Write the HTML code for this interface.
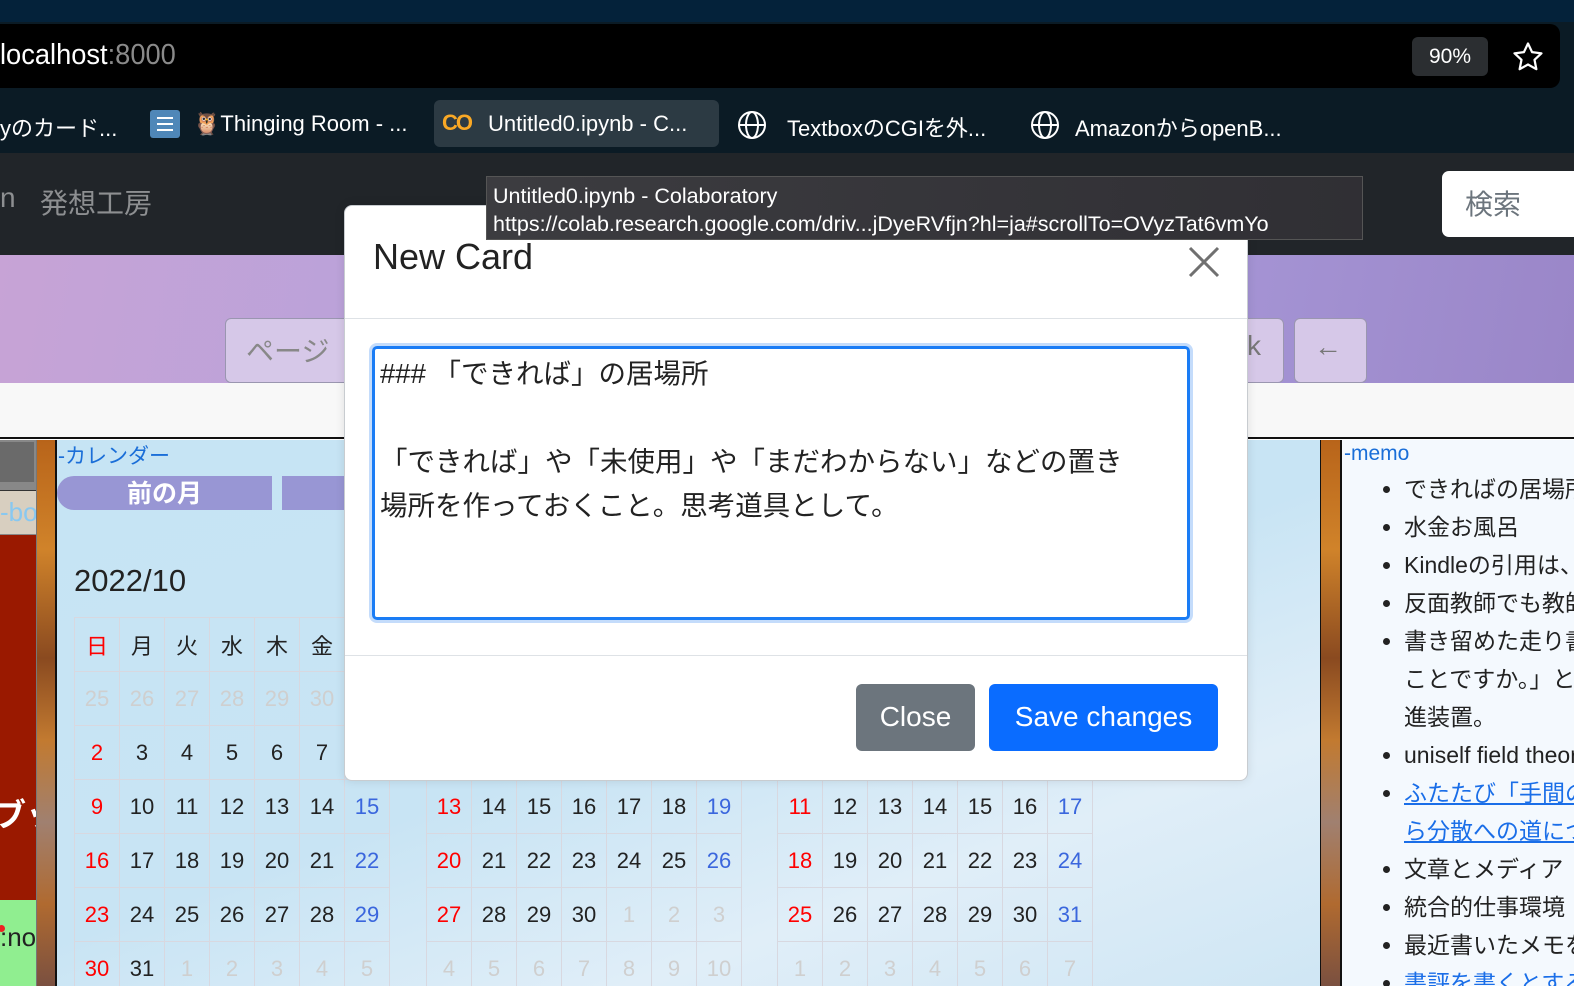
<!DOCTYPE html>
<html style="overflow:hidden"><head><meta charset="utf-8"><style>
*{margin:0;padding:0;box-sizing:border-box}
html,body{overflow:hidden}
body{width:1574px;height:986px;position:relative;font-family:"Liberation Sans","Noto Sans CJK JP",sans-serif;background:#fff}
.a{position:absolute;white-space:nowrap}
.leaves{background:linear-gradient(180deg,#b8641a,#d0832a 20%,#8a4a20 40%,#c27a30 55%,#a08070 70%,#b06a30 85%,#7a5040)}
.cal td{width:45px;height:54px;text-align:center;font-size:22px;color:#222;border:1px solid #d8d8e0}
.cal{border-collapse:collapse;position:absolute}
.cal td.r{color:#f00}.cal td.b{color:#3a66dd}.cal td.g{color:#cfcfcf}
.memo li{margin-left:62px;font-size:23px;line-height:38px;color:#222}
.memo a{color:#1a6ee8;text-decoration:underline}
.bm{font-size:22px;color:#fff;top:111px}
.clip{position:absolute;left:0;top:0;width:1574px;height:986px;overflow:hidden}
</style></head><body><div class="clip">
<div class="a" style="left:0;top:0;width:1574px;height:22px;background:#04223a"></div>
<div class="a" style="left:0;top:22px;width:1574px;height:131px;background:#0b1b25"></div>
<div class="a" style="left:0;top:24px;width:1560px;height:64px;background:#000;border-radius:0 10px 10px 0"></div>
<div class="a" style="left:0;top:39px;font-size:29px;color:#fff;transform:scaleX(.94);transform-origin:left">localhost<span style="color:#8a8a8a">:8000</span></div>
<div class="a" style="left:1412px;top:37px;width:76px;height:39px;background:#2b2e31;border-radius:6px;color:#fff;font-size:21px;text-align:center;line-height:39px">90%</div>
<svg class="a" style="left:1511px;top:40px" width="34" height="34" viewBox="0 0 24 24"><path d="M12 2.5l2.9 6.1 6.6.8-4.9 4.6 1.3 6.6L12 17.3 6.1 20.6l1.3-6.6L2.5 9.4l6.6-.8z" fill="none" stroke="#fff" stroke-width="1.6" stroke-linejoin="round"/></svg>
<div class="a" style="left:434px;top:100px;width:285px;height:47px;background:#2c3a43;border-radius:6px"></div>
<div class="a bm" style="left:0">yのカード...</div>
<div class="a" style="left:150px;top:110px;width:30px;height:28px;background:#4f87b8;border-radius:3px"></div>
<div class="a" style="left:157px;top:117px;width:16px;height:2px;background:#fff;box-shadow:0 6px #fff,0 12px #fff"></div>
<div class="a bm" style="left:193px">🦉Thinging Room - ...</div>
<div class="a" style="left:442px;top:110px;font-size:22px;font-weight:bold;color:#f9a825;letter-spacing:-2px">CO</div>
<div class="a bm" style="left:488px">Untitled0.ipynb - C...</div>
<svg class="a" style="left:737px;top:110px" width="30" height="30" viewBox="0 0 30 30"><g fill="none" stroke="#fff" stroke-width="2"><circle cx="15" cy="15" r="13"/><ellipse cx="15" cy="15" rx="6" ry="13"/><path d="M2 15h26"/></g></svg>
<div class="a bm" style="left:787px">TextboxのCGIを外...</div>
<svg class="a" style="left:1030px;top:110px" width="30" height="30" viewBox="0 0 30 30"><g fill="none" stroke="#fff" stroke-width="2"><circle cx="15" cy="15" r="13"/><ellipse cx="15" cy="15" rx="6" ry="13"/><path d="M2 15h26"/></g></svg>
<div class="a bm" style="left:1075px">AmazonからopenB...</div>
<div class="a" style="left:0;top:153px;width:1574px;height:102px;background:#212529"></div>
<div class="a" style="left:0;top:182px;font-size:28px;color:#8d8f91">n</div>
<div class="a" style="left:40px;top:182px;font-size:28px;color:#8d8f91">発想工房</div>
<div class="a" style="left:1442px;top:171px;width:140px;height:66px;background:#fff;border-radius:7px"></div>
<div class="a" style="left:1465px;top:183px;font-size:28px;color:#6c757d">検索</div>
<div class="a" style="left:0;top:255px;width:1574px;height:128px;background:linear-gradient(100deg,#c7a3d6,#b2a2dc 40%,#a898d8 70%,#9a86c8)"></div>
<div class="a" style="left:225px;top:318px;width:130px;height:65px;background:#d6c8e8;border:1px solid #9a96b0;border-radius:6px"></div>
<div class="a" style="left:246px;top:330px;font-size:28px;color:#888">ページ</div>
<div class="a" style="left:1220px;top:318px;width:64px;height:65px;background:#d6c8e8;border:1px solid #9a96b0;border-radius:6px"></div>
<div class="a" style="left:1247px;top:330px;font-size:28px;color:#777">k</div>
<div class="a" style="left:1294px;top:318px;width:73px;height:65px;background:#d6c8e8;border:1px solid #9a96b0;border-radius:6px"></div>
<div class="a" style="left:1314px;top:331px;font-size:28px;color:#777">←</div>
<div class="a" style="left:0;top:383px;width:1574px;height:56px;background:#f8f8f8;border-bottom:2px solid #111"></div>
<div class="a" style="left:0;top:440px;width:36px;height:546px;background:#888"></div>
<div class="a" style="left:0;top:442px;width:34px;height:40px;background:#6a6a6a"></div>
<div class="a" style="left:0;top:490px;width:36px;height:44px;background:#d8cfc0;border-top:1px solid #333"></div>
<div class="a" style="left:0;top:497px;font-size:26px;color:#88c8f0">-bo</div>
<div class="a" style="left:0;top:535px;width:36px;height:365px;background:#9a1900"></div>
<div class="a" style="left:-6px;top:790px;font-size:32px;color:#fff;font-weight:bold">ブッ</div>
<div class="a" style="left:0;top:900px;width:36px;height:86px;background:#90ee90"></div>
<div class="a" style="left:0;top:922px;font-size:26px;color:#222">:no</div>
<div class="a" style="left:-2px;top:925px;width:7px;height:7px;border-radius:50%;background:#e22"></div>
<div class="a leaves" style="left:36px;top:440px;width:19px;height:546px;border-left:1px solid #777"></div>
<div class="a" style="left:55px;top:440px;width:2px;height:546px;background:#111"></div>
<div class="a" style="left:57px;top:440px;width:1263px;height:546px;background:linear-gradient(160deg,#c6e4f4,#c8e4f4 50%,#e0eef8 75%,#cfe6f4)"></div>
<div class="a" style="left:58px;top:440px;font-size:21px;color:#1a6ed8">-カレンダー</div>
<div class="a" style="left:57px;top:476px;width:215px;height:34px;background:#9896d4;border-radius:17px 0 0 17px;color:#fff;font-size:25px;text-align:center;line-height:36px;font-weight:bold">前の月</div>
<div class="a" style="left:282px;top:476px;width:70px;height:34px;background:#9896d4"></div>
<div class="a" style="left:74px;top:563px;font-size:31px;color:#222">2022/10</div>
<table class="cal" style="left:74px;top:617px">
<tr><td class="r">日</td><td>月</td><td>火</td><td>水</td><td>木</td><td>金</td><td>土</td></tr>
<tr><td class="g">25</td><td class="g">26</td><td class="g">27</td><td class="g">28</td><td class="g">29</td><td class="g">30</td><td class="b">1</td></tr>
<tr><td class="r">2</td><td>3</td><td>4</td><td>5</td><td>6</td><td>7</td><td class="b">8</td></tr>
<tr><td class="r">9</td><td>10</td><td>11</td><td>12</td><td>13</td><td>14</td><td class="b">15</td></tr>
<tr><td class="r">16</td><td>17</td><td>18</td><td>19</td><td>20</td><td>21</td><td class="b">22</td></tr>
<tr><td class="r">23</td><td>24</td><td>25</td><td>26</td><td>27</td><td>28</td><td class="b">29</td></tr>
<tr><td class="r">30</td><td>31</td><td class="g">1</td><td class="g">2</td><td class="g">3</td><td class="g">4</td><td class="g">5</td></tr>
</table>
<table class="cal" style="left:426px;top:617px">
<tr><td class="r">日</td><td>月</td><td>火</td><td>水</td><td>木</td><td>金</td><td>土</td></tr>
<tr><td class="g">30</td><td class="g">31</td><td>1</td><td>2</td><td>3</td><td>4</td><td class="b">5</td></tr>
<tr><td class="r">6</td><td>7</td><td>8</td><td>9</td><td>10</td><td>11</td><td class="b">12</td></tr>
<tr><td class="r">13</td><td>14</td><td>15</td><td>16</td><td>17</td><td>18</td><td class="b">19</td></tr>
<tr><td class="r">20</td><td>21</td><td>22</td><td>23</td><td>24</td><td>25</td><td class="b">26</td></tr>
<tr><td class="r">27</td><td>28</td><td>29</td><td>30</td><td class="g">1</td><td class="g">2</td><td class="g">3</td></tr>
<tr><td class="g">4</td><td class="g">5</td><td class="g">6</td><td class="g">7</td><td class="g">8</td><td class="g">9</td><td class="g">10</td></tr>
</table>
<table class="cal" style="left:777px;top:617px">
<tr><td class="r">日</td><td>月</td><td>火</td><td>水</td><td>木</td><td>金</td><td>土</td></tr>
<tr><td class="g">27</td><td class="g">28</td><td class="g">29</td><td class="g">30</td><td>1</td><td>2</td><td class="b">3</td></tr>
<tr><td class="r">4</td><td>5</td><td>6</td><td>7</td><td>8</td><td>9</td><td class="b">10</td></tr>
<tr><td class="r">11</td><td>12</td><td>13</td><td>14</td><td>15</td><td>16</td><td class="b">17</td></tr>
<tr><td class="r">18</td><td>19</td><td>20</td><td>21</td><td>22</td><td>23</td><td class="b">24</td></tr>
<tr><td class="r">25</td><td>26</td><td>27</td><td>28</td><td>29</td><td>30</td><td class="b">31</td></tr>
<tr><td class="g">1</td><td class="g">2</td><td class="g">3</td><td class="g">4</td><td class="g">5</td><td class="g">6</td><td class="g">7</td></tr>
</table>
<div class="a leaves" style="left:1320px;top:440px;width:22px;height:546px;border-left:1px solid #111;border-right:2px solid #111"></div>
<div class="a memo" style="left:1342px;top:440px;width:240px;height:546px;background:#f4f9fe;overflow:hidden">
<div style="font-size:21px;color:#1a6ed8;margin:2px 0 4px 2px">-memo</div>
<ul>
<li>できればの居場所</li><li>水金お風呂</li><li>Kindleの引用は、</li><li>反面教師でも教師</li>
<li>書き留めた走り書<br>ことですか。」と<br>進装置。</li><li>uniself field theory</li>
<li><a>ふたたび「手間の<br>ら分散への道につ</a></li><li>文章とメディア</li><li>統合的仕事環境</li><li>最近書いたメモを</li><li><a>書評を書くとする</a></li>
</ul></div>
<div class="a" style="left:344px;top:205px;width:904px;height:576px;background:#fff;border:1px solid #c8ccd0;border-radius:8px;box-shadow:0 0 10px rgba(0,0,0,.1)"></div>
<div class="a" style="left:373px;top:236px;font-size:36px;color:#222">New Card</div>
<svg class="a" style="left:1187px;top:245px" width="34" height="34" viewBox="0 0 34 34"><path d="M3 3L31 31M31 3L3 31" stroke="#707070" stroke-width="3"/></svg>
<div class="a" style="left:345px;top:318px;width:902px;height:1px;background:#dee2e6"></div>
<div class="a" style="left:372px;top:346px;width:818px;height:274px;border:3px solid #1a7cf5;border-radius:5px;box-shadow:0 0 0 3px #c4dcfb"></div>
<div class="a" style="left:380px;top:352px;font-size:27.5px;color:#222;line-height:44px;white-space:normal;width:805px">### 「できれば」の居場所<br><br>「できれば」や「未使用」や「まだわからない」などの置き<br>場所を作っておくこと。思考道具として。</div>
<div class="a" style="left:345px;top:655px;width:902px;height:1px;background:#dee2e6"></div>
<div class="a" style="left:856px;top:684px;width:119px;height:67px;background:#6c757d;border-radius:6px;color:#fff;font-size:28px;text-align:center;line-height:66px">Close</div>
<div class="a" style="left:989px;top:684px;width:229px;height:67px;background:#0a6cff;border-radius:6px;color:#fff;font-size:28px;text-align:center;line-height:66px">Save changes</div>
<div class="a" style="left:486px;top:176px;width:877px;height:64px;background:linear-gradient(90deg,#3c3c40,#302f34);border:1px solid #555;color:#fff;font-size:21.5px;line-height:28px;padding:5px 6px">Untitled0.ipynb - Colaboratory<br>https://colab.research.google.com/driv...jDyeRVfjn?hl=ja#scrollTo=OVyzTat6vmYo</div>
</div></body></html>
